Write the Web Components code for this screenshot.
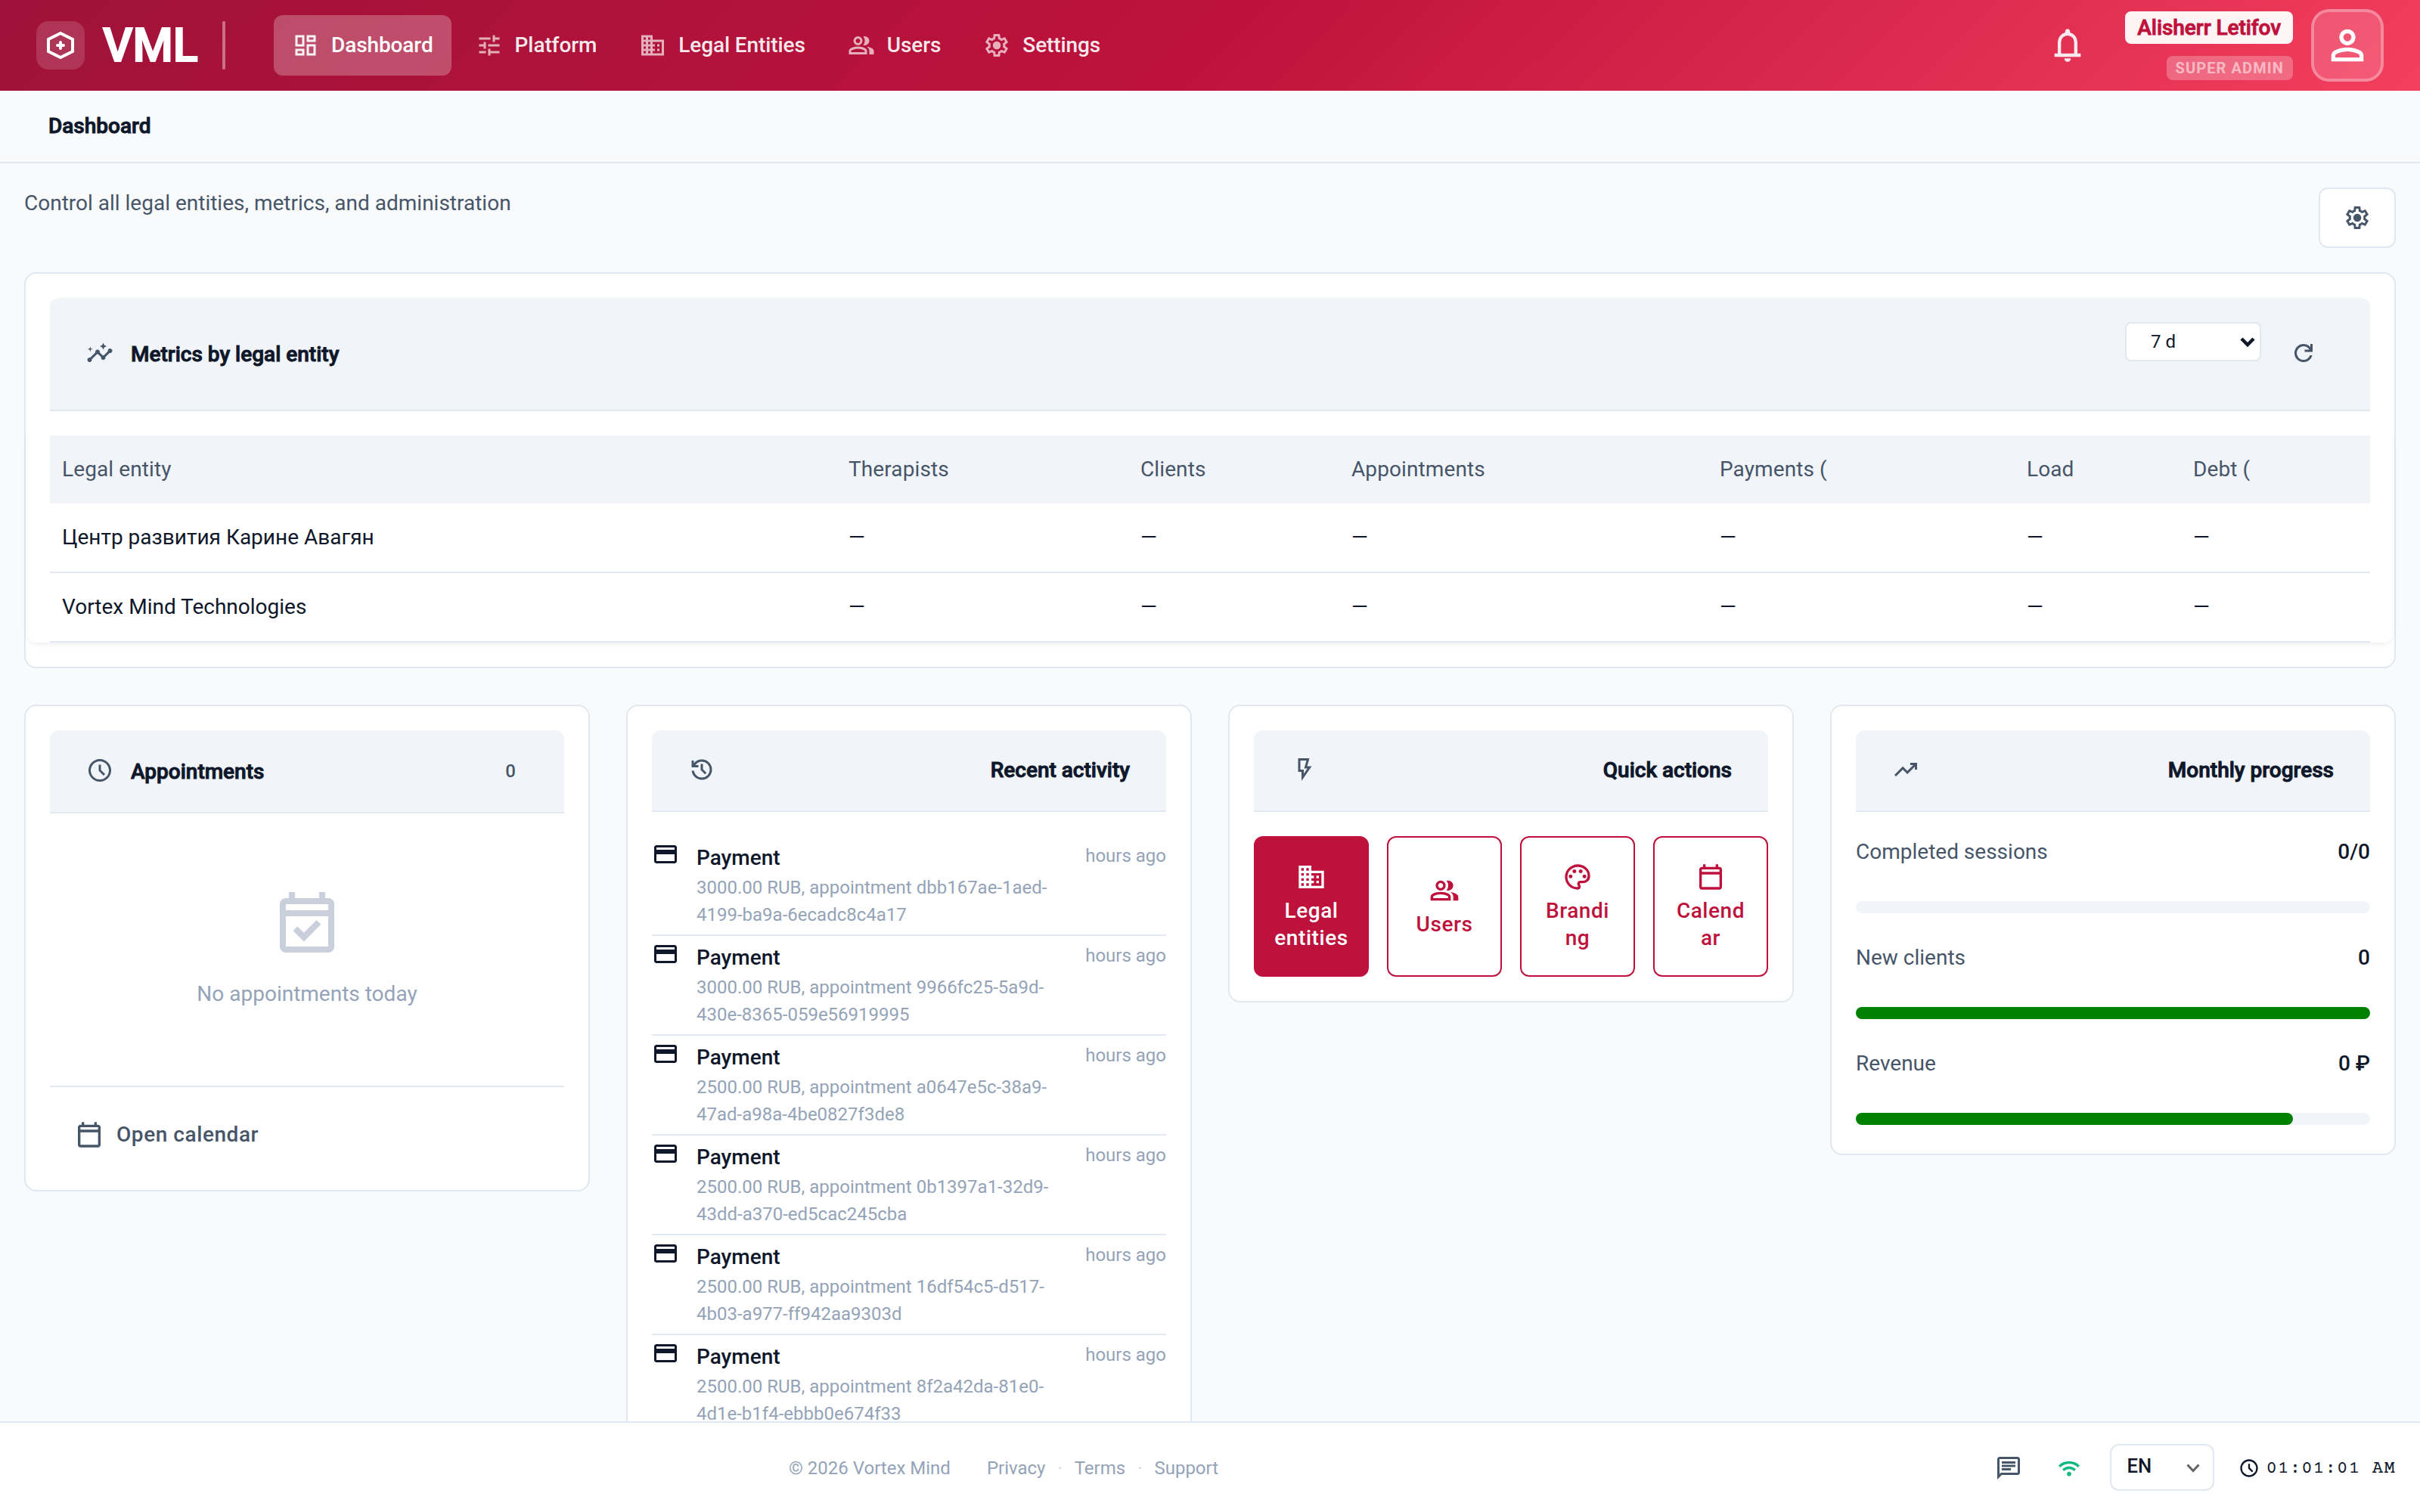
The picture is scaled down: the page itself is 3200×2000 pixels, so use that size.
<!DOCTYPE html>
<html lang="en">
<head>
<meta charset="utf-8">
<title>VML - Dashboard</title>
<style>
    :root {
        --brand: #be123c;
        --text: #0f172a;
        --text-soft: #475569;
        --text-muted: #94a3b8;
        --line: #e2e8f0;
        --surface: #ffffff;
        --surface-soft: #f1f5f9;
        --page: #f8fafc;
    }
    html, body {
        margin: 0;
        height: 100%;
    }
    body {
        background: var(--page);
        color: var(--text);
        font: 400 28px/42px Roboto, "Liberation Sans", sans-serif;
        overflow: hidden;
    }
</style>
</head>
<body>
<vml-app></vml-app>

<script>
const ICONS = {
    dashboard: "M120-840h320v400H120Zm80 80v240h160v-240Zm320-80h320v240H520Zm80 80v80h160v-80ZM520-520h320v400H520Zm80 80v240h160v-240ZM120-360h320v240H120Zm80 80v80h160v-80Z",
    tune: "M120-280v80h240v-80H120Zm0-480v80h400v-80H120Zm400 640v-80h320v-80H520v-80h-80v240h80ZM280-600v80H120v80h160v80h80v-240h-80Zm560 160v-80H440v80h400ZM600-600h80v-80h160v-80H680v-80h-80v240Z",
    business: "M80-120v-720h400v160h400v560H80Zm80-80h80v-80h-80v80Zm0-160h80v-80h-80v80Zm0-160h80v-80h-80v80Zm0-160h80v-80h-80v80Zm160 480h80v-80h-80v80Zm0-160h80v-80h-80v80Zm0-160h80v-80h-80v80Zm0-160h80v-80h-80v80Zm160 480h320v-400H480v80h80v80h-80v80h80v80h-80v80Zm160-240v-80h80v80h-80Zm0 160v-80h80v80h-80Z",
    group: "M40-160v-112q0-34 17.500-62.500T104-378q62-31 126-46.500T360-440q66 0 130 15.500T616-378q29 15 46.500 43.500T680-272v112H40Zm720 0v-120q0-44-24.500-84.500T666-434q51 6 96 20.500t84 35.500q36 20 55 44.500t19 53.500v120H760ZM360-480q-66 0-113-47t-47-113q0-66 47-113t113-47q66 0 113 47t47 113q0 66-47 113t-113 47Zm400-160q0 66-47 113t-113 47q-11 0-28-2.500t-28-5.500q27-32 41.500-71t14.500-81q0-42-14.500-81T544-792q14-5 28-6.500t28-1.500q66 0 113 47t47 113ZM120-240h480v-32q0-11-5.500-20T580-306q-54-27-109-40.500T360-360q-56 0-111 13.500T140-306q-9 5-14.500 14t-5.500 20v32Zm240-320q33 0 56.500-23.500T440-640q0-33-23.500-56.500T360-720q-33 0-56.500 23.500T280-640q0 33 23.500 56.500T360-560Z",
    settings: "m370-80-16-128q-13-5-24.500-12T307-235l-119 50L78-375l103-78q-1-7-1-13.500v-27q0-6.500 1-13.500L78-585l110-190 119 50q11-8 23-15t24-12l16-128h220l16 128q13 5 24.500 12t22.500 15l119-50 110 190-103 78q1 7 1 13.500v27q0 6.500-2 13.500l103 78-110 190-118-50q-11 8-23 15t-24 12L590-80H370Zm70-80h79l14-106q31-8 57.500-23.500T639-327l99 41 39-68-86-65q5-14 7-29.500t2-31.500q0-16-2-31.500t-7-29.500l86-65-39-68-99 42q-22-23-48.500-38.500T533-694l-13-106h-79l-14 106q-31 8-57.500 23.500T321-633l-99-41-39 68 86 64q-5 15-7 30t-2 32q0 16 2 31t7 30l-86 65 39 68 99-42q22 23 48.500 38.500T427-266l13 106Zm42-180q58 0 99-41t41-99q0-58-41-99t-99-41q-59 0-99.500 41T342-480q0 58 40.500 99t99.500 41Z",
    bell: "M160-200v-80h80v-280q0-83 50-147.500T420-792v-28q0-25 17.500-42.500T480-880q25 0 42.500 17.500T540-820v28q80 20 130 84.500T720-560v280h80v80H160Zm320 120q-33 0-56.500-23.500T400-160h160q0 33-23.500 56.500T480-80ZM320-280h320v-280q0-66-47-113t-113-47q-66 0-113 47t-47 113v280Z",
    person: "M480-480q-66 0-113-47t-47-113q0-66 47-113t113-47q66 0 113 47t47 113q0 66-47 113t-113 47ZM160-160v-112q0-34 17.500-62.500T224-378q62-31 126-46.500T480-440q66 0 130 15.500T736-378q29 15 46.500 43.500T800-272v112H160Zm80-80h480v-32q0-11-5.500-20T700-306q-54-27-109-40.500T480-360q-56 0-111 13.500T260-306q-9 5-14.500 14t-5.500 20v32Zm240-320q33 0 56.500-23.500T560-640q0-33-23.500-56.500T480-720q-33 0-56.500 23.500T400-640q0 33 23.500 56.500T480-560Z",
    refresh: "M480-160q-134 0-227-93t-93-227q0-134 93-227t227-93q69 0 132 28.500T720-690v-110h80v280H520v-80h168q-32-56-87.500-88T480-720q-100 0-170 70t-70 170q0 100 70 170t170 70q77 0 139-44t87-116h84q-28 106-114 173t-196 67Z",
    schedule: "m612-292 56-56-148-148v-184h-80v216l172 172ZM480-80q-83 0-156-31.500T197-197q-54-54-85.500-127T80-480q0-83 31.500-156T197-763q54-54 127-85.500T480-880q83 0 156 31.500T763-763q54 54 85.500 127T880-480q0 83-31.500 156T763-197q-54 54-127 85.500T480-80Zm0-80q133 0 226.500-93.500T800-480q0-133-93.500-226.500T480-800q-133 0-226.500 93.500T160-480q0 133 93.500 226.500T480-160Z",
    history: "M480-120q-138 0-240.500-91.500T122-440h82q14 104 92.500 172T480-200q117 0 198.500-81.500T760-480q0-117-81.500-198.500T480-760q-69 0-129 32t-101 88h110v80H120v-240h80v94q51-64 124.500-99T480-840q75 0 140.500 28.500t114 77q48.500 48.500 77 114T840-480q0 75-28.500 140.500t-77 114q-48.500 48.500-114 77T480-120Zm112-192L440-464v-216h80v184l128 128-56 56Z",
    flash: "m480-336 128-184H494l80-280H360v320h120v144ZM400-80v-320H280v-480h400l-80 280h160L400-80Z",
    trending: "m136-240-56-56 296-298 160 160 208-206H640v-80h240v240h-80v-104L536-320 376-480 136-240Z",
    card: "M880-720v480q0 33-23.500 56.500T800-160H160q-33 0-56.500-23.500T80-240v-480q0-33 23.500-56.500T160-800h640q33 0 56.500 23.500T880-720Zm-720 80h640v-80H160v80Zm0 160v240h640v-240H160Z",
    calendar: "M200-80q-33 0-56.500-23.500T120-160v-560q0-33 23.500-56.500T200-800h40v-80h80v80h320v-80h80v80h40q33 0 56.500 23.500T840-720v560q0 33-23.500 56.500T760-80H200Zm0-80h560v-400H200v400Zm0-480h560v-80H200v80Z",
    available: "M438-226 296-368l58-58 84 84 168-168 58 58-226 226ZM200-80q-33 0-56.500-23.500T120-160v-560q0-33 23.500-56.500T200-800h40v-80h80v80h320v-80h80v80h40q33 0 56.500 23.500T840-720v560q0 33-23.500 56.500T760-80H200Zm0-80h560v-400H200v400Zm0-480h560v-80H200v80Z",
    palette: "M480-80q-82 0-155-31.500t-127.500-86Q143-252 111.500-325T80-480q0-83 32.500-156t88-127Q256-817 330-848.500T488-880q80 0 151 27.500t124.500 76q53.500 48.500 85 115T880-518q0 115-70 176.500T640-280h-74q-9 0-12.500 5t-3.500 11q0 12 15 34.500t15 51.500q0 50-27.500 74T480-80Zm-220-360q26 0 43-17t17-43q0-26-17-43t-43-17q-26 0-43 17t-17 43q0 26 17 43t43 17Zm120-160q26 0 43-17t17-43q0-26-17-43t-43-17q-26 0-43 17t-17 43q0 26 17 43t43 17Zm200 0q26 0 43-17t17-43q0-26-17-43t-43-17q-26 0-43 17t-17 43q0 26 17 43t43 17Zm120 160q26 0 43-17t17-43q0-26-17-43t-43-17q-26 0-43 17t-17 43q0 26 17 43t43 17ZM480-160q9 0 14.500-5t5.500-13q0-14-15-33t-15-57q0-42 29-67t71-25h70q66 0 113-38.500T800-518q0-121-92.500-201.500T488-800q-136 0-232 93t-96 227q0 133 93.500 226.500T480-160Z",
    chat: "M240-400h320v-80H240v80Zm0-120h480v-80H240v80Zm0-120h480v-80H240v80ZM80-80v-720q0-33 23.500-56.500T160-880h640q33 0 56.500 23.500T880-800v480q0 33-23.500 56.500T800-240H240L80-80Zm126-240h594v-480H160v525l46-45Z",
    wifi: "M480-120q-42 0-71-29t-29-71q0-42 29-71t71-29q42 0 71 29t29 71q0 42-29 71t-71 29ZM254-346l-84-86q59-59 138.500-93.500T480-560q92 0 171.500 35T790-430l-84 84q-44-44-102-69t-124-25q-66 0-124 25t-102 69ZM84-516 0-600q92-94 215-147t265-53q142 0 265 53t215 147l-84 84q-77-77-178.500-120.500T480-680q-116 0-217.500 43.500T84-516Z",
    insights: "M840-640c-58 0-90 58-77 100L621-397c-12-4-30-4-42 0L477-499c14-43-19-101-77-101s-91 58-77 101L140-317c-43-13-100 19-100 77 0 44 36 80 80 80 58 0 90-58 77-100l182-183c12 4 30 4 42 0l102 102c-14 43 19 101 77 101s91-58 77-101l143-142c43 13 100-19 100-77 0-44-36-80-80-80ZM600-600l38-83 82-37-82-37-38-83-37 83-83 37 83 37ZM140-520l20-80 80-20-80-20-20-80-20 80-80 20 80 20Z"
};

class VmlIcon extends HTMLElement {
    constructor() {
        super();
        this.attachShadow({ mode: "open" });
        this.shadowRoot.innerHTML = `
            <style>
                :host {
                    display: block;
                    flex: none;
                    width: var(--size, 36px);
                    height: var(--size, 36px);
                }
                svg { display: block; width: 100%; height: 100%; fill: currentColor; }
            </style>
            <svg viewBox="0 -960 960 960" aria-hidden="true"><path></path></svg>
        `;
    }

    connectedCallback() {
        this.shadowRoot.querySelector("path").setAttribute("d", ICONS[this.getAttribute("name")] || "");
    }
}

class VmlNavItem extends HTMLElement {
    constructor() {
        super();
        this.attachShadow({ mode: "open" });
        this.shadowRoot.innerHTML = `
            <style>
                :host {
                    display: flex;
                    align-items: center;
                    gap: 16px;
                    height: 80px;
                    padding: 0 24px;
                    border-radius: 12px;
                    font-weight: 500;
                    letter-spacing: -.1px;
                    color: rgba(255, 255, 255, .92);
                    white-space: nowrap;
                }
                vml-icon { opacity: .72; }
                :host([active]) { background: rgba(255, 255, 255, .25); color: #fff; }
                :host([active]) vml-icon { opacity: .92; }
            </style>
            <vml-icon name="${this.getAttribute("icon")}"></vml-icon><slot></slot>
        `;
    }
}

class VmlHeader extends HTMLElement {
    constructor() {
        super();
        this.attachShadow({ mode: "open" });
        this.shadowRoot.innerHTML = `
            <style>
                :host {
                    display: flex;
                    align-items: center;
                    box-sizing: border-box;
                    height: 120px;
                    padding: 0 48px;
                    color: #fff;
                    background: linear-gradient(135deg, #9f1239 0%, #be123c 50%, #f43f5e 100%);
                }
                .mark {
                    width: 64px;
                    height: 64px;
                    border-radius: 16px;
                    background: rgba(255, 255, 255, .15);
                }
                .mark svg { display: block; }
                .name {
                    width: 158px;
                    margin-left: 24px;
                    font-size: 61px;
                    line-height: 72px;
                    font-weight: 500;
                    -webkit-text-stroke: 2px currentColor;
                }
                .rule {
                    width: 4px;
                    height: 64px;
                    border-radius: 2px;
                    background: rgba(255, 255, 255, .4);
                }
                nav { display: flex; gap: 8px; margin-left: 64px; flex: 1; }
                .bell { --size: 52px; margin-right: 50px; opacity: .9; }
                .user {
                    display: flex;
                    flex-direction: column;
                    align-items: flex-end;
                    gap: 16px;
                    margin-right: 24px;
                }
                .user b {
                    padding: 4px 16px;
                    border-radius: 8px;
                    background: rgba(255, 255, 255, .95);
                    color: var(--brand);
                    line-height: 35px;
                    font-weight: 500;
                    letter-spacing: -.06px;
                    -webkit-text-stroke: .95px currentColor;
                }
                .user span {
                    padding: 4px 12px;
                    border-radius: 8px;
                    background: rgba(255, 255, 255, .25);
                    color: rgba(255, 255, 255, .55);
                    font-size: 20px;
                    line-height: 24px;
                    font-weight: 700;
                    letter-spacing: 1.100px;
                }
                .avatar {
                    --size: 64px;
                    display: grid;
                    place-items: center;
                    box-sizing: border-box;
                    width: 96px;
                    height: 96px;
                    border: 4px solid rgba(255, 255, 255, .4);
                    border-radius: 24px;
                    background: rgba(255, 255, 255, .15);
                    background-clip: padding-box;
                }
            </style>
            <div class="mark">
                <svg width="64" height="64" fill="none" stroke="#fff" stroke-width="4">
                    <path d="M32 16l16 8v16l-16 8-16-8V24z"></path>
                    <path d="M32 28v8M28 32h8" stroke-linecap="round"></path>
                </svg>
            </div>
            <div class="name">VML</div>
            <div class="rule"></div>
            <nav><slot></slot></nav>
            <vml-icon class="bell" name="bell"></vml-icon>
            <div class="user"><b>Alisherr Letifov</b><span>SUPER ADMIN</span></div>
            <div class="avatar"><vml-icon name="person"></vml-icon></div>
        `;
    }
}

class VmlCard extends HTMLElement {
    constructor() {
        super();
        this.attachShadow({ mode: "open" });
        this.shadowRoot.innerHTML = `
            <style>
                :host {
                    display: block;
                    box-sizing: border-box;
                    padding: 32px;
                    border: 2px solid var(--line);
                    border-radius: 16px;
                    background: var(--surface);
                }
                header {
                    display: flex;
                    align-items: center;
                    justify-content: space-between;
                    box-sizing: border-box;
                    height: var(--head-height, 108px);
                    padding: 0 48px;
                    border-bottom: 2px solid var(--line);
                    border-radius: 12px 12px 0 0;
                    background: var(--surface-soft);
                }
                vml-icon { color: var(--text-soft); transform: translateY(-1px); }
                h3 {
                    margin: 0;
                    font-size: 28px;
                    font-weight: 500;
                    -webkit-text-stroke: .95px currentColor;
                }
                :host([start]) header { justify-content: flex-start; gap: 23px; }
                :host([start]) h3 { flex: 1; padding-top: 2px; }
            </style>
            <header>
                <vml-icon name="${this.getAttribute("icon")}"></vml-icon>
                <h3>${this.getAttribute("heading")}</h3>
                <slot name="tools"></slot>
            </header>
            <slot></slot>
        `;
    }
}

class VmlMetricsTable extends HTMLElement {
    constructor() {
        super();
        this.attachShadow({ mode: "open" });
        const heads = ["Legal entity", "Therapists", "Clients", "Appointments", "Payments (", "Load", "Debt ("];
        const rows = ["Центр развития Карине Авагян", "Vortex Mind Technologies"];
        this.shadowRoot.innerHTML = `
            <style>
                :host {
                    display: block;
                    margin: 32px -32px 0;
                    padding: 0 32px;
                    border-radius: 0 0 16px 16px;
                    box-shadow: 0 4px 6px -1px rgba(0, 0, 0, .06);
                }
                .row {
                    display: grid;
                    grid-template-columns: 1040px 386px 279px 487px 406px 220px 1fr;
                    align-items: center;
                    height: 90px;
                    border-bottom: 2px solid var(--line);
                }
                .row > span { padding-left: 16px; }
                .head { border: 0; background: var(--surface-soft); color: var(--text-soft); letter-spacing: .1px; }
            </style>
            <div class="row head">${heads.map(h => `<span>${h}</span>`).join("")}</div>
            ${rows.map(r => `<div class="row"><span>${r}</span>${"<span>—</span>".repeat(6)}</div>`).join("")}
        `;
    }
}

class VmlActivity extends HTMLElement {
    constructor() {
        super();
        this.attachShadow({ mode: "open" });
        this.shadowRoot.innerHTML = `
            <style>
                :host {
                    display: flex;
                    align-items: flex-start;
                    padding: 8px 0;
                    border-bottom: 2px solid var(--line);
                }
                vml-icon { margin-top: -2px; }
                .body { flex: 1; margin: 0 31px 0 23px; }
                .title { font-weight: 500; }
                .desc, time {
                    font-size: 24px;
                    line-height: 36px;
                    color: var(--text-muted);
                }
            </style>
            <vml-icon name="card"></vml-icon>
            <div class="body">
                <div class="title">Payment</div>
                <div class="desc"><slot></slot></div>
            </div>
            <time>hours ago</time>
        `;
    }
}

class VmlQuickAction extends HTMLElement {
    constructor() {
        super();
        this.attachShadow({ mode: "open" });
        this.shadowRoot.innerHTML = `
            <style>
                :host {
                    --size: 40px;
                    display: flex;
                    flex-direction: column;
                    align-items: center;
                    justify-content: center;
                    gap: 7px;
                    box-sizing: border-box;
                    height: 186px;
                    padding: 0 24px;
                    border: 2px solid var(--brand);
                    border-radius: 12px;
                    color: var(--brand);
                    font-weight: 500;
                    line-height: 36px;
                    letter-spacing: .56px;
                    text-align: center;
                }
                :host([primary]) { background: var(--brand); color: #fff; }
                span { width: 100%; overflow-wrap: anywhere; }
            </style>
            <vml-icon name="${this.getAttribute("icon")}"></vml-icon><span><slot></slot></span>
        `;
    }
}

class VmlProgress extends HTMLElement {
    constructor() {
        super();
        this.attachShadow({ mode: "open" });
        this.shadowRoot.innerHTML = `
            <style>
                :host { display: block; }
                .row { display: flex; justify-content: space-between; margin-bottom: 44px; }
                .row span { color: var(--text-soft); }
                .row b { font-weight: 500; }
                .track { height: 16px; border-radius: 8px; background: var(--surface-soft); }
                .fill { height: 100%; border-radius: 8px; background: #008000; }
            </style>
            <div class="row"><span><slot></slot></span><b></b></div>
            <div class="track"><div class="fill"></div></div>
        `;
        this.shadowRoot.querySelector("b").textContent = this.getAttribute("value");
        this.shadowRoot.querySelector(".fill").style.width = this.getAttribute("percent") + "%";
    }
}

class VmlFooter extends HTMLElement {
    constructor() {
        super();
        this.attachShadow({ mode: "open" });
        this.shadowRoot.innerHTML = `
            <style>
                :host {
                    display: flex;
                    align-items: center;
                    box-sizing: border-box;
                    height: 120px;
                    padding: 1px 32px 0 1043px;
                    border-top: 2px solid var(--line);
                    background: var(--surface);
                    font-size: 24px;
                    color: var(--text-muted);
                    white-space: nowrap;
                }
                .links { display: flex; margin-left: 48px; gap: 16px; flex: 1; }
                .links i { font-style: normal; color: #cbd5e1; }
                .chat { color: var(--text-soft); margin-right: 48px; }
                .wifi { --size: 28px; color: #10b981; margin-right: 40px; }
                .lang {
                    display: flex;
                    align-items: center;
                    justify-content: space-between;
                    box-sizing: border-box;
                    width: 138px;
                    height: 62px;
                    margin: -1px 32px 0 0;
                    padding: 0 17px 4px 21px;
                    border: 2px solid var(--line);
                    border-radius: 12px;
                    color: var(--text);
                    font-size: 25.6px;
                    font-weight: 500;
                }
                .lang svg { margin-top: 5px; }
                .clock { --size: 28px; color: var(--text); margin-right: 9px; }
                .time {
                    padding-top: 2px;
                    font: 400 24px/28px "Courier Prime", "Nimbus Mono PS", "FreeMono", "Liberation Mono", monospace;
                    letter-spacing: 1.200px;
                    color: var(--text);
                }
            </style>
            <span>© 2026 Vortex Mind</span>
            <div class="links"><span>Privacy</span><i>·</i><span>Terms</span><i>·</i><span>Support</span></div>
            <vml-icon class="chat" name="chat"></vml-icon>
            <vml-icon class="wifi" name="wifi"></vml-icon>
            <div class="lang">EN<svg width="18" height="12" fill="none" stroke="#666" stroke-width="3"><path d="M1.500 1.500L9 9.500l7.500-8"></path></svg></div>
            <vml-icon class="clock" name="schedule"></vml-icon>
            <span class="time">01:01:01 AM</span>
        `;
    }
}

class VmlApp extends HTMLElement {
    constructor() {
        super();
        this.attachShadow({ mode: "open" });
        this.shadowRoot.innerHTML = `
            <style>
                :host {
                    display: grid;
                    grid-template-rows: 120px 96px minmax(0, 1fr) 120px;
                    height: 100vh;
                }
                .crumb {
                    padding: 26px 64px 0;
                    border-bottom: 2px solid var(--line);
                    font-weight: 500;
                    -webkit-text-stroke: .95px currentColor;
                }
                main { padding: 32px 32px 0; overflow: hidden; }
                .intro { display: flex; justify-content: space-between; height: 80px; margin-bottom: 32px; color: var(--text-soft); }
                .gear {
                    display: grid;
                    place-items: center;
                    box-sizing: border-box;
                    width: 102px;
                    height: 80px;
                    border: 2px solid var(--line);
                    border-radius: 12px;
                    background: var(--surface);
                }
                .metrics { --head-height: 150px; }
                .period {
                    display: flex;
                    align-items: center;
                    justify-content: space-between;
                    align-self: flex-start;
                    box-sizing: border-box;
                    width: 180px;
                    height: 52px;
                    margin: 32px 15px 0 0;
                    padding: 0 6px 0 32px;
                    border: 2px solid var(--line);
                    border-radius: 8px;
                    background: var(--surface);
                    font-size: 24px;
                }
                .refresh { color: var(--text-soft); margin-right: 22px; transform: translateY(-1px); }
                .grid {
                    display: grid;
                    grid-template-columns: repeat(4, 1fr);
                    align-items: start;
                    gap: 48px;
                    margin-top: 48px;
                }
                .today { --head-height: 110px; }
                .count { padding-right: 16px; font-size: 24px; font-weight: 500; color: var(--text-soft); }
                .empty {
                    display: flex;
                    flex-direction: column;
                    align-items: center;
                    gap: 26px;
                    height: 264px;
                    padding-top: 96px;
                    color: var(--text-muted);
                }
                .empty vml-icon { --size: 96px; opacity: .5; }
                .open {
                    --size: 40px;
                    display: flex;
                    align-items: center;
                    gap: 16px;
                    height: 60px;
                    padding: 33px 32px 11px;
                    border-top: 2px solid var(--line);
                    color: var(--text-soft);
                    font-weight: 500;
                    letter-spacing: .56px;
                }
                .list { margin-top: 32px; }
                .actions { display: grid; grid-template-columns: repeat(4, 152px); gap: 24px; margin-top: 32px; }
                .progress { display: flex; flex-direction: column; gap: 38px; padding: 32px 0 6px; }
            </style>
            <vml-header>
                <vml-nav-item icon="dashboard" active>Dashboard</vml-nav-item>
                <vml-nav-item icon="tune">Platform</vml-nav-item>
                <vml-nav-item icon="business">Legal Entities</vml-nav-item>
                <vml-nav-item icon="group">Users</vml-nav-item>
                <vml-nav-item icon="settings">Settings</vml-nav-item>
            </vml-header>
            <div class="crumb">Dashboard</div>
            <main>
                <div class="intro">
                    <span>Control all legal entities, metrics, and administration</span>
                    <div class="gear"><vml-icon name="settings"></vml-icon></div>
                </div>
                <vml-card class="metrics" icon="insights" heading="Metrics by legal entity" start>
                    <div class="period" slot="tools">7 d<svg width="20" height="13" fill="none" stroke="#0f172a" stroke-width="4.500"><path d="M2 2l8 8 8-8"></path></svg></div>
                    <vml-icon class="refresh" slot="tools" name="refresh"></vml-icon>
                    <vml-metrics-table></vml-metrics-table>
                </vml-card>
                <div class="grid">
                    <vml-card class="today" icon="schedule" heading="Appointments" start>
                        <span class="count" slot="tools">0</span>
                        <div class="empty"><vml-icon name="available"></vml-icon>No appointments today</div>
                        <div class="open"><vml-icon name="calendar"></vml-icon>Open calendar</div>
                    </vml-card>
                    <vml-card icon="history" heading="Recent activity">
                        <div class="list">
                            <vml-activity>3000.00 RUB, appointment dbb167ae-1aed-4199-ba9a-6ecadc8c4a17</vml-activity>
                            <vml-activity>3000.00 RUB, appointment 9966fc25-5a9d-430e-8365-059e56919995</vml-activity>
                            <vml-activity>2500.00 RUB, appointment a0647e5c-38a9-47ad-a98a-4be0827f3de8</vml-activity>
                            <vml-activity>2500.00 RUB, appointment 0b1397a1-32d9-43dd-a370-ed5cac245cba</vml-activity>
                            <vml-activity>2500.00 RUB, appointment 16df54c5-d517-4b03-a977-ff942aa9303d</vml-activity>
                            <vml-activity>2500.00 RUB, appointment 8f2a42da-81e0-4d1e-b1f4-ebbb0e674f33</vml-activity>
                        </div>
                    </vml-card>
                    <vml-card icon="flash" heading="Quick actions">
                        <div class="actions">
                            <vml-quick-action icon="business" primary>Legal entities</vml-quick-action>
                            <vml-quick-action icon="group">Users</vml-quick-action>
                            <vml-quick-action icon="palette">Branding</vml-quick-action>
                            <vml-quick-action icon="calendar">Calendar</vml-quick-action>
                        </div>
                    </vml-card>
                    <vml-card icon="trending" heading="Monthly progress">
                        <div class="progress">
                            <vml-progress value="0/0" percent="0">Completed sessions</vml-progress>
                            <vml-progress value="0" percent="100">New clients</vml-progress>
                            <vml-progress value="0 ₽" percent="85">Revenue</vml-progress>
                        </div>
                    </vml-card>
                </div>
            </main>
            <vml-footer></vml-footer>
        `;
    }
}

customElements.define("vml-app", VmlApp);
customElements.define("vml-header", VmlHeader);
customElements.define("vml-nav-item", VmlNavItem);
customElements.define("vml-icon", VmlIcon);
customElements.define("vml-card", VmlCard);
customElements.define("vml-metrics-table", VmlMetricsTable);
customElements.define("vml-activity", VmlActivity);
customElements.define("vml-quick-action", VmlQuickAction);
customElements.define("vml-progress", VmlProgress);
customElements.define("vml-footer", VmlFooter);
</script>
</body>
</html>
